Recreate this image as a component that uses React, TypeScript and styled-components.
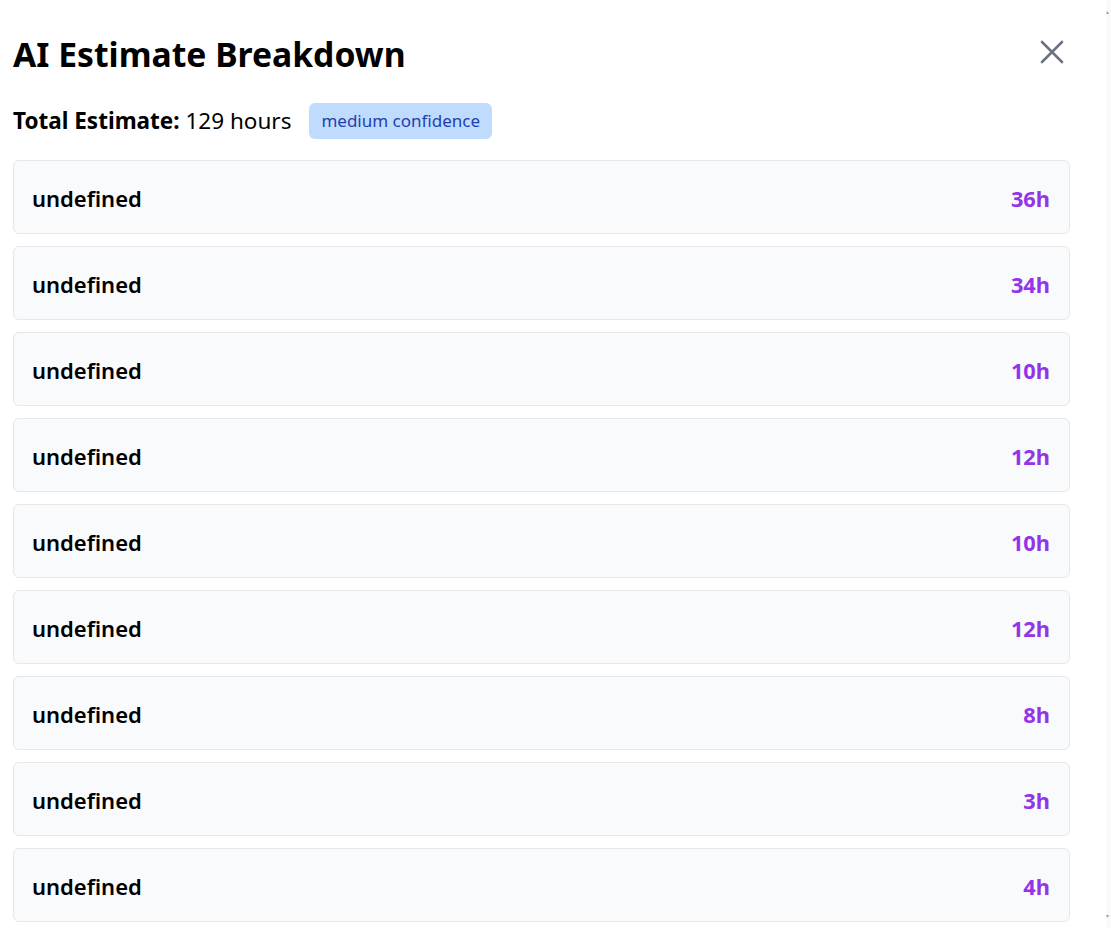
import React from "react";
import styled, { createGlobalStyle } from "styled-components";

const Global = createGlobalStyle`
  html, body {
    margin: 0;
    padding: 0;
    background: #ffffff;
    font-family: "Noto Sans", "Open Sans", Arial, sans-serif;
    color: #000000;
  }
`;

interface iItem {
  task?: string;
  hours: number;
}

const items: iItem[] = [
  { hours: 36 },
  { hours: 34 },
  { hours: 10 },
  { hours: 12 },
  { hours: 10 },
  { hours: 12 },
  { hours: 8 },
  { hours: 3 },
  { hours: 4 },
];

const App: React.FC = () => {
  const total = items.reduce((s, i) => s + i.hours, 0);

  return (
    <Page>
      <Global />
      <Panel>
        <Header>
          <Title>AI Estimate Breakdown</Title>
          <CloseBtn aria-label="Close">
            <svg width="24" height="24" viewBox="0 0 24 24" fill="none">
              <path d="M2 2 L22 22 M22 2 L2 22" stroke="#6b7280" strokeWidth="2.6" strokeLinecap="round" />
            </svg>
          </CloseBtn>
        </Header>

        <Summary>
          <SummaryText>
            <strong>Total Estimate:</strong> {total} hours
          </SummaryText>
          <Badge>medium confidence</Badge>
        </Summary>

        <List>
          {items.map((item, idx) => (
            <Row key={idx}>
              <TaskName>{String(item.task)}</TaskName>
              <Hours>{item.hours}h</Hours>
            </Row>
          ))}
        </List>
      </Panel>
      <Scrollbar>
        <Arrow>▴</Arrow>
        <Arrow>▾</Arrow>
      </Scrollbar>
    </Page>
  );
};
export default App;

const Page = styled.div`
  display: flex;
  width: 1111px;
  height: 928px;
  overflow: hidden;
`;
const Panel = styled.div`
  flex: 1;
  padding: 28px 36px 0 13px;
`;
const Header = styled.div`
  display: flex;
  justify-content: space-between;
  align-items: flex-start;
`;
const Title = styled.h2`
  margin: 0;
  font-size: 33.7px;
  line-height: 52px;
  font-weight: 700;
`;
const CloseBtn = styled.button`
  background: none;
  border: none;
  padding: 0;
  margin: 12px 6px 0 0;
  width: 24px;
  height: 24px;
  cursor: pointer;
  display: flex;
`;
const Summary = styled.div`
  display: flex;
  align-items: center;
  gap: 18px;
  margin-top: 23px;
`;
const SummaryText = styled.div`
  font-size: 22.5px;
  line-height: 36px;
  strong {
    font-weight: 700;
  }
`;
const Badge = styled.span`
  background: #bfdbfe;
  color: #1e40af;
  font-size: 17px;
  line-height: 24px;
  padding: 6px 12px;
  border-radius: 6px;
`;
const List = styled.div`
  display: flex;
  flex-direction: column;
  gap: 12px;
  margin-top: 21px;
`;
const Row = styled.div`
  display: flex;
  justify-content: space-between;
  align-items: center;
  height: 74px;
  box-sizing: border-box;
  padding: 2px 19px 0 18px;
  background: #f9fafb;
  border: 1px solid #e5e7eb;
  border-radius: 6px;
`;
const TaskName = styled.span`
  font-size: 22px;
  font-weight: 600;
`;
const Hours = styled.span`
  font-size: 21.8px;
  font-weight: 700;
  color: #9333ea;
`;
const Scrollbar = styled.div`
  width: 5px;
  flex: none;
  background: #fafafa;
  display: flex;
  flex-direction: column;
  justify-content: space-between;
  padding: 8px 0;
  box-sizing: border-box;
`;
const Arrow = styled.span`
  font-size: 6px;
  line-height: 8px;
  color: #a3a3a3;
  overflow: hidden;
`;
